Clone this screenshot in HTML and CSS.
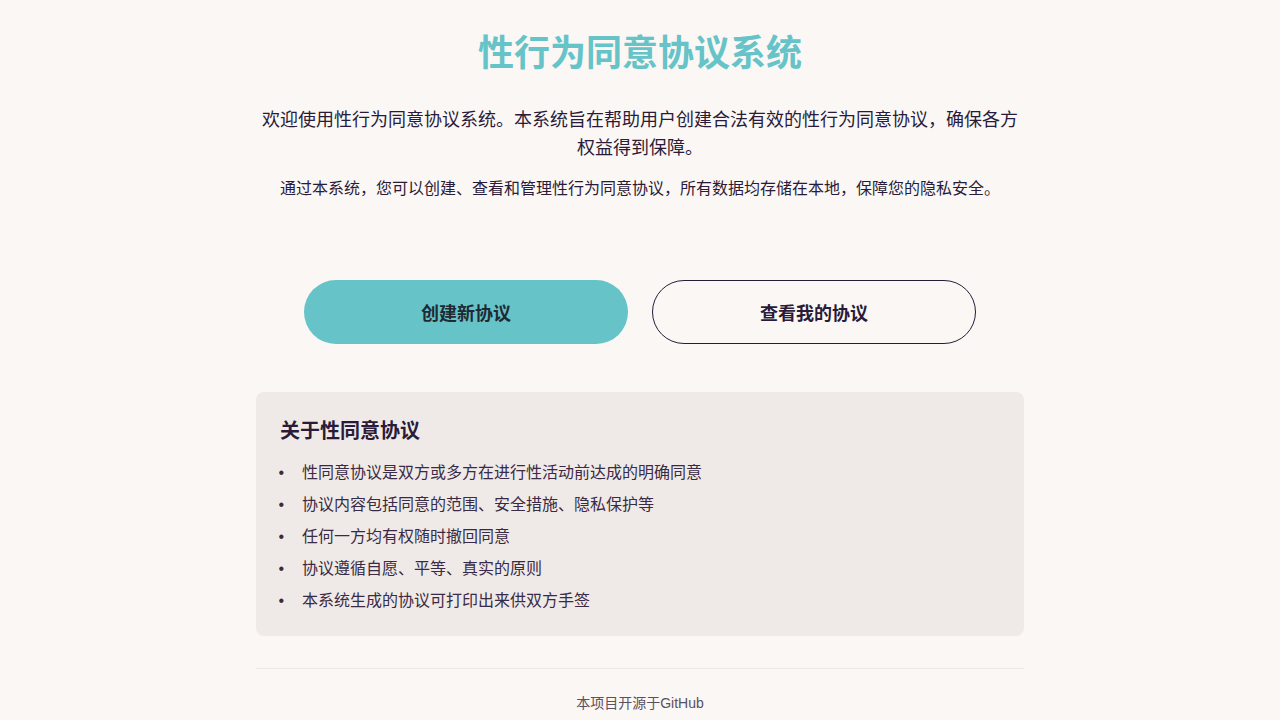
FILE: index.html
```html
<!DOCTYPE html>
<html lang="zh-CN">
<head>
<meta charset="utf-8">
<title>性行为同意协议系统</title>
<link rel="stylesheet" href="styles.css">
</head>
<body>
<main class="container">
  <h1 class="title">性行为同意协议系统</h1>
  <p class="intro">欢迎使用性行为同意协议系统。本系统旨在帮助用户创建合法有效的性行为同意协议，确保各方权益得到保障。</p>
  <p class="sub">通过本系统，您可以创建、查看和管理性行为同意协议，所有数据均存储在本地，保障您的隐私安全。</p>
  <div class="actions">
    <a class="btn btn-primary" href="#">创建新协议</a>
    <a class="btn btn-outline" href="#">查看我的协议</a>
  </div>
  <section class="card">
    <h3 class="card-title">关于性同意协议</h3>
    <ul class="card-list">
      <li>性同意协议是双方或多方在进行性活动前达成的明确同意</li>
      <li>协议内容包括同意的范围、安全措施、隐私保护等</li>
      <li>任何一方均有权随时撤回同意</li>
      <li>协议遵循自愿、平等、真实的原则</li>
      <li>本系统生成的协议可打印出来供双方手签</li>
    </ul>
  </section>
  <footer class="footer">本项目开源于GitHub</footer>
</main>
</body>
</html>
```

FILE: styles.css
```css
* { box-sizing: border-box; }
html, body {
  margin: 0;
  background: #faf7f5;
}
body {
  font-family: "Liberation Sans", "Noto Sans CJK SC", sans-serif;
  color: #2a1b38;
}
.container {
  width: 768px;
  margin: 0 auto;
  padding-top: 32px;
  text-align: center;
}
.title {
  margin: 0;
  font-size: 36px;
  line-height: 44px;
  font-weight: 700;
  color: #66c3c7;
}
.intro {
  margin: 30px 0 0;
  font-size: 18px;
  line-height: 28px;
}
.sub {
  margin: 15px 0 0;
  font-size: 16px;
  line-height: 24px;
}
.actions {
  display: flex;
  justify-content: center;
  gap: 24px;
  margin-top: 79px;
}
.btn {
  display: flex;
  align-items: center;
  justify-content: center;
  width: 324px;
  height: 64px;
  border-radius: 32px;
  font-size: 18px;
  font-weight: 700;
  text-decoration: none;
  color: #2a1b38;
}
.btn-primary {
  background: #66c3c7;
  color: #1f2a33;
}
.btn-outline {
  border: 1px solid #2a1b38;
  background: transparent;
}
.card {
  margin-top: 48px;
  background: #efeae7;
  border-radius: 8px;
  padding: 25px 24px 19px;
  text-align: left;
}
.card-title {
  margin: 0 0 12px;
  font-size: 20px;
  line-height: 28px;
  font-weight: 700;
}
.card-list {
  margin: 0;
  padding-left: 22px;
  font-size: 16px;
  line-height: 32px;
  color: #3a2b45;
}
.card-list li::marker {
  content: "\2022\00a0\00a0\00a0\00a0";
}
.footer {
  margin-top: 32px;
  border-top: 1px solid #ece8e5;
  padding-top: 23px;
  font-size: 14px;
  line-height: 22px;
  color: #5a5060;
}
```
